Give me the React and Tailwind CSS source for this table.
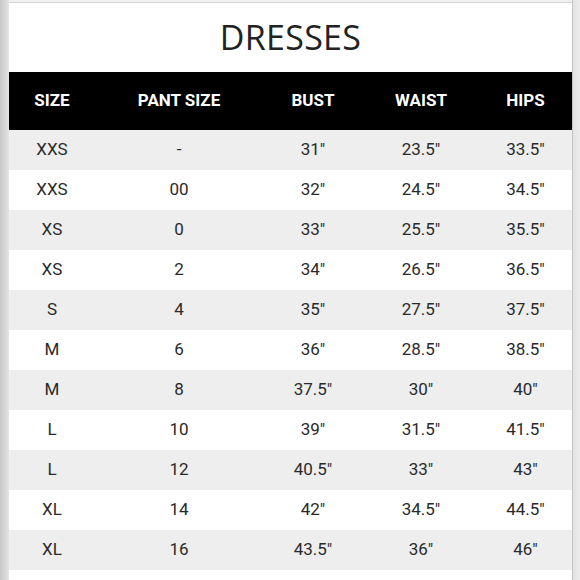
import React from "react";

const cols = ["w-[86px]", "w-[168px]", "w-[100px]", "w-[116px]", "w-[93px]"];
const headers = ["SIZE", "PANT SIZE", "BUST", "WAIST", "HIPS"];
const rows = [
  ["XXS", "-", '31"', '23.5"', '33.5"'],
  ["XXS", "00", '32"', '24.5"', '34.5"'],
  ["XS", "0", '33"', '25.5"', '35.5"'],
  ["XS", "2", '34"', '26.5"', '36.5"'],
  ["S", "4", '35"', '27.5"', '37.5"'],
  ["M", "6", '36"', '28.5"', '38.5"'],
  ["M", "8", '37.5"', '30"', '40"'],
  ["L", "10", '39"', '31.5"', '41.5"'],
  ["L", "12", '40.5"', '33"', '43"'],
  ["XL", "14", '42"', '34.5"', '44.5"'],
  ["XL", "16", '43.5"', '36"', '46"'],
];

export default function App() {
  return (
    <div className="w-[580px] h-[580px] flex bg-white overflow-hidden" style={{ fontFamily: "Roboto, 'Liberation Sans', sans-serif" }}>
      <div className="w-[9px] h-full bg-gradient-to-r from-[#c8c8c8] to-[#e4e4e4]" />
      <div className="w-[563px] h-full flex flex-col">
        <div className="h-[3px] bg-[#f0f0f0] border-b border-[#d4d4d4]" />
        <div className="h-[69px] flex items-center justify-center">
          <span className="text-[34px] text-[#222] tracking-[0.3px] leading-none mb-[1px]" style={{ fontFamily: "'Open Sans', 'Noto Sans', sans-serif" }}>DRESSES</span>
        </div>
        <div className="h-[58px] bg-black flex items-center">
          {headers.map((h, i) => (
            <div key={i} className={`${cols[i]} text-center text-white font-bold text-[17px]`}>{h}</div>
          ))}
        </div>
        {rows.map((r, ri) => (
          <div key={ri} className={`h-[40px] flex items-center ${ri % 2 === 0 ? "bg-[#eeeeee]" : "bg-white"}`}>
            {r.map((c, ci) => (
              <div key={ci} className={`${cols[ci]} text-center text-[#2a2a2a] text-[17px]`}>{c}</div>
            ))}
          </div>
        ))}
      </div>
      <div className="w-[1px] h-full bg-[#c4c4c4]" />
      <div className="w-[7px] h-full bg-gradient-to-r from-[#e2e2e2] to-[#eeeeee]" />
    </div>
  );
}
